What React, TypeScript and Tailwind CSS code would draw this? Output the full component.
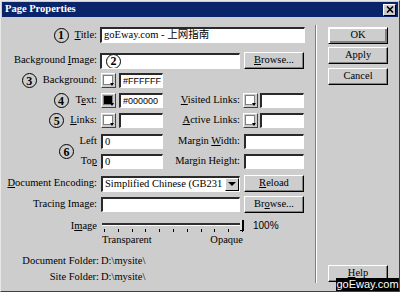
import React from 'react'

const ticks = Array.from({ length: 11 }, (_, i) => i)

function Num({ n }: { n: number }) {
  return (
    <span className="inline-flex w-[15px] h-[15px] shrink-0 items-center justify-center rounded-full border-[1.5px] border-black text-[12px] font-bold leading-none text-black">
      {n}
    </span>
  )
}

function Field({ className, children }: { className?: string; children?: React.ReactNode }) {
  return (
    <div
      className={
        'flex items-center overflow-hidden whitespace-nowrap bg-white pl-[2px] border-t-2 border-l-2 border-t-[#2a2a2a] border-l-[#2a2a2a] border-b border-r border-b-white border-r-white ' +
        (className || '')
      }
    >
      {children}
    </div>
  )
}

function Btn({ className, children }: { className?: string; children: React.ReactNode }) {
  return (
    <div
      className={
        'flex w-[60px] items-center justify-center border border-t-white border-l-white border-b-black border-r-black shadow-[inset_-1px_-1px_0_#808080] ' +
        (className || '')
      }
    >
      {children}
    </div>
  )
}

function Swatch({ color }: { color: string }) {
  return (
    <div className="relative h-[15px] w-[15px] shrink-0 border border-t-white border-l-white border-b-[#404040] border-r-[#404040] p-[1px]">
      <div className={'h-[10px] w-[10px] border border-[#808080] ' + color} />
      <div className="absolute bottom-[1px] right-[1px] h-0 w-0 border-l-[2px] border-r-[2px] border-t-[3px] border-l-transparent border-r-transparent border-t-black" />
    </div>
  )
}

export default function App() {
  return (
    <div className="relative h-[292px] w-[400px] overflow-hidden border border-t-[#e8e8e8] border-l-[#e8e8e8] border-b-[#404040] border-r-[#404040] bg-[#cdcdcd] font-['Liberation_Serif','Noto_Sans_CJK_SC',serif] text-[10.5px] leading-none text-black">
      <div className="mx-[1px] mt-[1px] flex h-[15px] items-center justify-between bg-[#0a246a] pl-[3px] pr-[2px]">
        <span className="font-bold text-white">Page Properties</span>
        <div className="flex h-[12px] w-[13px] items-center justify-center border border-t-white border-l-white border-b-black border-r-black bg-[#cdcdcd]">
          <svg width="8" height="7" viewBox="0 0 8 7">
            <path d="M1 0.5 L7 6.5 M7 0.5 L1 6.5" stroke="#000" strokeWidth="1.6" />
          </svg>
        </div>
      </div>

      <div className="flex h-[274px]">
        <div className="flex w-[314px] flex-col pt-[10px]">
          <div className="flex h-[16px] items-center">
            <div className="flex w-[96px] items-center justify-end gap-[6px]">
              <Num n={1} />
              <span><span className="underline">T</span>itle:</span>
            </div>
            <Field className="ml-[3px] h-[16px] w-[205px]">
              <span>goEway.com - 上网指南</span>
            </Field>
          </div>

          <div className="mt-[9px] flex h-[17px] items-center">
            <div className="w-[96px] text-right">
              Background <span className="underline">I</span>mage:
            </div>
            <Field className="ml-[3px] h-[16px] w-[140px] pl-[4px]">
              <Num n={2} />
            </Field>
            <Btn className="ml-[4px] h-[17px]">
              <span><span className="underline">B</span>rowse...</span>
            </Btn>
          </div>

          <div className="mt-[4px] flex h-[15px] items-center">
            <div className="flex w-[96px] items-center justify-end gap-[6px]">
              <Num n={3} />
              <span>Background:</span>
            </div>
            <div className="ml-[4px]"><Swatch color="bg-white" /></div>
            <Field className="ml-[3px] h-[15px] w-[44px] font-['Liberation_Sans',sans-serif] text-[9px]">#FFFFFF</Field>
          </div>

          <div className="mt-[5px] flex h-[15px] items-center">
            <div className="flex w-[96px] items-center justify-end gap-[7px]">
              <Num n={4} />
              <span>T<span className="underline">e</span>xt:</span>
            </div>
            <div className="ml-[4px]"><Swatch color="bg-black" /></div>
            <Field className="ml-[3px] h-[15px] w-[44px] font-['Liberation_Sans',sans-serif] text-[9px]">#000000</Field>
            <div className="w-[77px] text-right">
              <span className="underline">V</span>isited Links:
            </div>
            <div className="ml-[3px]"><Swatch color="bg-white" /></div>
            <Field className="ml-[2px] h-[15px] w-[44px]" />
          </div>

          <div className="mt-[5px] flex h-[15px] items-center">
            <div className="flex w-[96px] items-center justify-end gap-[6px]">
              <Num n={5} />
              <span><span className="underline">L</span>inks:</span>
            </div>
            <div className="ml-[4px]"><Swatch color="bg-white" /></div>
            <Field className="ml-[3px] h-[15px] w-[44px]" />
            <div className="w-[77px] text-right">
              <span className="underline">A</span>ctive Links:
            </div>
            <div className="ml-[3px]"><Swatch color="bg-white" /></div>
            <Field className="ml-[2px] h-[15px] w-[44px]" />
          </div>

          <div className="relative mt-[6px]">
            <div className="absolute left-[58px] top-[10px]">
              <Num n={6} />
            </div>
            <div className="flex h-[15px] items-center">
              <div className="w-[96px] text-right">Left</div>
              <Field className="ml-[4px] h-[15px] w-[62px]">0</Field>
              <div className="w-[77px] text-right">
                Margin <span className="underline">W</span>idth:
              </div>
              <Field className="ml-[4px] h-[15px] w-[60px]" />
            </div>
            <div className="mt-[5px] flex h-[15px] items-center">
              <div className="w-[96px] text-right">
                To<span className="underline">p</span>
              </div>
              <Field className="ml-[4px] h-[15px] w-[62px]">0</Field>
              <div className="w-[77px] text-right">Margin Height:</div>
              <Field className="ml-[4px] h-[15px] w-[60px]" />
            </div>
          </div>

          <div className="mt-[6px] flex h-[17px] items-center">
            <div className="w-[96px] text-right">
              <span className="underline">D</span>ocument Encoding:
            </div>
            <Field className="ml-[4px] h-[16px] w-[139px] pr-0">
              <span className="flex-1 overflow-hidden">Simplified Chinese (GB231</span>
              <div className="flex h-[13px] w-[14px] shrink-0 items-center justify-center border border-t-white border-l-white border-b-black border-r-black bg-[#cdcdcd]">
                <div className="h-0 w-0 border-l-[4px] border-r-[4px] border-t-[4px] border-l-transparent border-r-transparent border-t-black" />
              </div>
            </Field>
            <Btn className="ml-[4px] h-[17px]">
              <span><span className="underline">R</span>eload</span>
            </Btn>
          </div>

          <div className="mt-[4px] flex h-[17px] items-center">
            <div className="w-[96px] text-right">Tracing Image:</div>
            <Field className="ml-[4px] h-[15px] w-[139px]" />
            <Btn className="ml-[4px] h-[17px]">
              <span>Br<span className="underline">o</span>wse...</span>
            </Btn>
          </div>

          <div className="mt-[5px] flex h-[16px] items-center">
            <div className="w-[96px] text-right">
              I<span className="underline">m</span>age
            </div>
            <div className="relative ml-[5px] h-[16px] w-[142px]">
              <div className="absolute left-0 top-[5px] h-[3px] w-[139px] border-t-2 border-b border-t-[#303030] border-b-white" />
              {ticks.map((i) => (
                <div
                  key={i}
                  className="absolute top-[11px] h-[3px] w-[1px] bg-black"
                  style={{ left: 2 + i * 13.8 }}
                />
              ))}
              <div className="absolute left-[138px] top-[2px] h-[11px] w-[4px] border-r-2 border-b border-r-black border-b-black bg-[#e0e0e0]" />
            </div>
            <span className="ml-[9px] font-['Liberation_Sans',sans-serif] text-[10px]">100%</span>
          </div>

          <div className="ml-[101px] mt-[1px] flex h-[10px] w-[141px] items-center justify-between">
            <span>Transparent</span>
            <span>Opaque</span>
          </div>

          <div className="mt-[11px] flex h-[10px] items-center">
            <div className="w-[98px] text-right">Document Folder:</div>
            <span className="ml-[2px]">D:\mysite\</span>
          </div>
          <div className="mt-[6px] flex h-[10px] items-center">
            <div className="w-[98px] text-right">Site Folder:</div>
            <span className="ml-[2px]">D:\mysite\</span>
          </div>
        </div>

        <div className="mt-[8px] h-[258px] w-[2px] border-l border-r border-l-[#808080] border-r-white" />

        <div className="flex flex-col pb-[9px] pl-[11px] pt-[10px]">
          <Btn className="h-[17px] border-black shadow-[inset_1px_1px_0_#fff,inset_-2px_-2px_0_#808080]">OK</Btn>
          <Btn className="mt-[3px] h-[17px]">Apply</Btn>
          <Btn className="mt-[4px] h-[17px]">Cancel</Btn>
          <Btn className="mt-auto h-[17px]">
            <span><span className="underline">H</span>elp</span>
          </Btn>
        </div>
      </div>

      <div className="absolute bottom-0 right-0 flex h-[13px] w-[63px] items-center justify-center bg-black font-['Liberation_Sans',sans-serif] text-[11px] text-white">
        goEway.com
      </div>
    </div>
  )
}
